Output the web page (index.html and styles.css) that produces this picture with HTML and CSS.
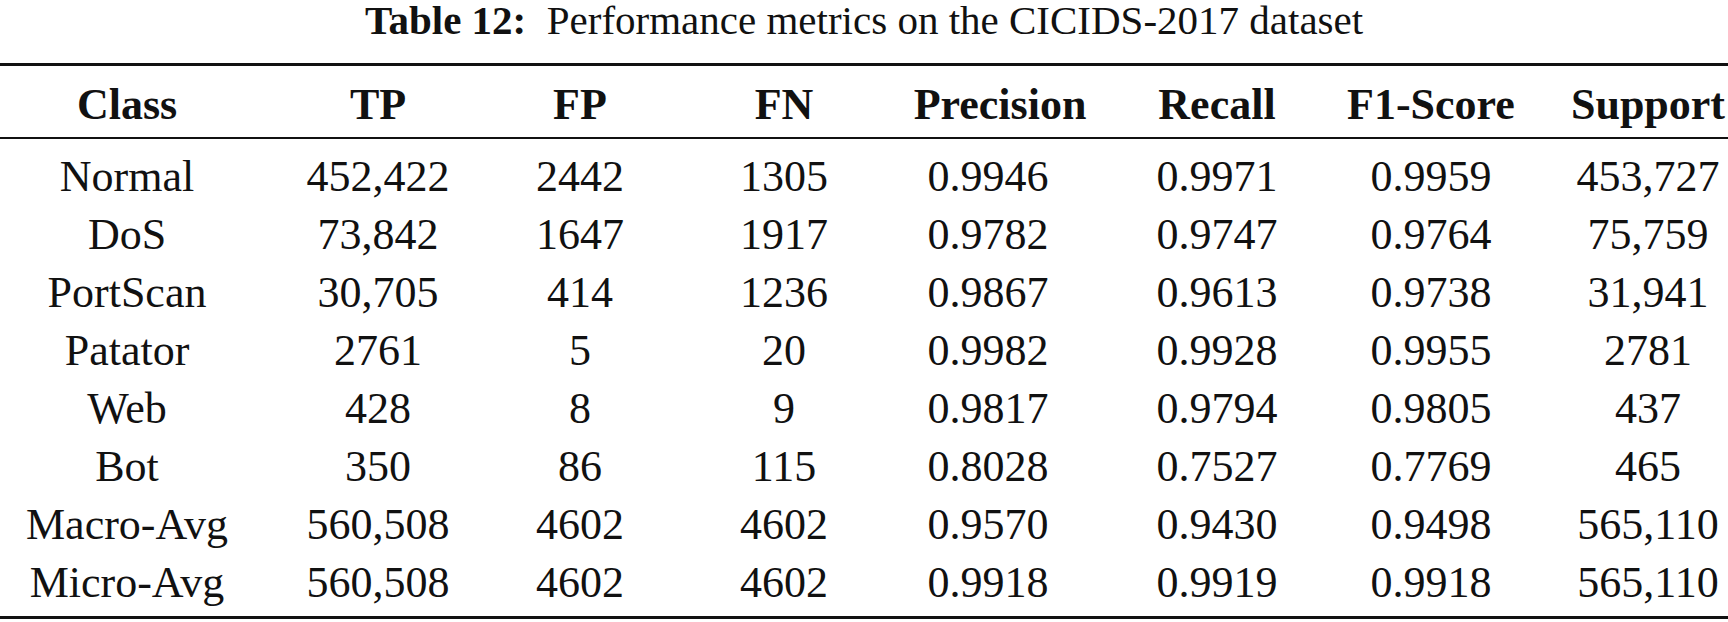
FILE: index.html
```html
<!DOCTYPE html>
<html lang="en">
<head>
<meta charset="utf-8">
<title>Table 12</title>
<link rel="stylesheet" href="styles.css">
</head>
<body>
<div class="caption"><b>Table 12:</b>&nbsp; Performance metrics on the CICIDS-2017 dataset</div>
<table class="metrics">
  <colgroup>
    <col class="c-class"><col class="c-tp"><col class="c-fp"><col class="c-fn">
    <col class="c-prec"><col class="c-rec"><col class="c-f1"><col class="c-sup">
  </colgroup>
  <thead>
    <tr><th>Class</th><th>TP</th><th>FP</th><th>FN</th><th>Precision</th><th>Recall</th><th>F1-Score</th><th class="sup">Support</th></tr>
  </thead>
  <tbody>
    <tr><td>Normal</td><td>452,422</td><td>2442</td><td>1305</td><td class="prec">0.9946</td><td>0.9971</td><td>0.9959</td><td class="sup">453,727</td></tr>
    <tr><td>DoS</td><td>73,842</td><td>1647</td><td>1917</td><td class="prec">0.9782</td><td>0.9747</td><td>0.9764</td><td class="sup">75,759</td></tr>
    <tr><td>PortScan</td><td>30,705</td><td>414</td><td>1236</td><td class="prec">0.9867</td><td>0.9613</td><td>0.9738</td><td class="sup">31,941</td></tr>
    <tr><td>Patator</td><td>2761</td><td>5</td><td>20</td><td class="prec">0.9982</td><td>0.9928</td><td>0.9955</td><td class="sup">2781</td></tr>
    <tr><td>Web</td><td>428</td><td>8</td><td>9</td><td class="prec">0.9817</td><td>0.9794</td><td>0.9805</td><td class="sup">437</td></tr>
    <tr><td>Bot</td><td>350</td><td>86</td><td>115</td><td class="prec">0.8028</td><td>0.7527</td><td>0.7769</td><td class="sup">465</td></tr>
    <tr><td>Macro-Avg</td><td>560,508</td><td>4602</td><td>4602</td><td class="prec">0.9570</td><td>0.9430</td><td>0.9498</td><td class="sup">565,110</td></tr>
    <tr><td>Micro-Avg</td><td>560,508</td><td>4602</td><td>4602</td><td class="prec">0.9918</td><td>0.9919</td><td>0.9918</td><td class="sup">565,110</td></tr>
  </tbody>
</table>
</body>
</html>
```
FILE: styles.css
```css
html, body {
  margin: 0;
  padding: 0;
  background: #ffffff;
}
body {
  font-family: "Liberation Serif", "Times New Roman", serif;
  color: #111111;
  width: 1728px;
}
.caption {
  text-align: center;
  font-size: 41px;
  line-height: 40px;
  height: 40px;
  white-space: nowrap;
}
.caption b {
  font-weight: bold;
}
.metrics {
  margin-top: 23px;
  width: 1728px;
  table-layout: fixed;
  border-collapse: separate;
  border-spacing: 0;
  font-size: 44px;
  line-height: 58px;
}
.c-class { width: 254px; }
.c-tp { width: 248px; }
.c-fp { width: 156px; }
.c-fn { width: 252px; }
.c-prec { width: 180px; }
.c-rec { width: 254px; }
.c-f1 { width: 174px; }
.c-sup { width: 210px; }
.metrics th,
.metrics td {
  padding: 0;
  text-align: center;
  white-space: nowrap;
}
.metrics th {
  font-weight: bold;
  border-top: 3px solid #111111;
  border-bottom: 2px solid #111111;
  padding-top: 10px;
  padding-bottom: 3px;
}
.metrics tbody tr:first-child td {
  padding-top: 9px;
}
.metrics tbody tr:last-child td {
  padding-bottom: 4px;
  border-bottom: 3px solid #111111;
}
.metrics .prec {
  padding-right: 24px;
}
.metrics .sup {
  padding-left: 50px;
}
```
